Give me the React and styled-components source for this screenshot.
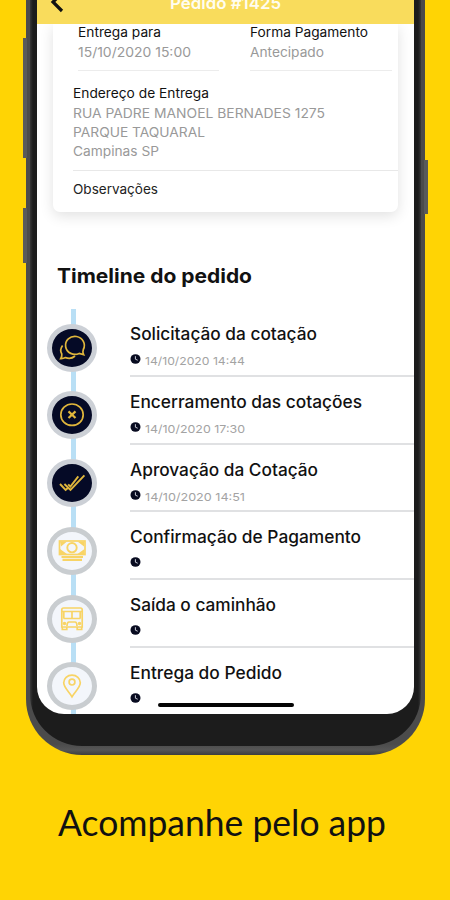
import React from 'react'
import styled, { createGlobalStyle } from 'styled-components'

const steps = [
    { title: 'Solicitação da cotação', date: '14/10/2020 14:44', icon: 'chat', done: true, w: 187 },
    { title: 'Encerramento das cotações', date: '14/10/2020 17:30', icon: 'close', done: true, w: 232 },
    { title: 'Aprovação da Cotação', date: '14/10/2020 14:51', icon: 'check', done: true, w: 188 },
    { title: 'Confirmação de Pagamento', date: '', icon: 'money', w: 231 },
    { title: 'Saída o caminhão', date: '', icon: 'bus', w: 146 },
    { title: 'Entrega do Pedido', date: '', icon: 'pin', w: 152 },
]

// drawn around the centre of the marker
const icons = {
    chat: (
        <>
            <path d="M11.3 1.500A9.400 9 0 1 0 7.200 5.400L11.600 6.600Q10.300 4 11.300 1.500z" />
            <path d="M-9.400-2.500C-11.700.5-11.700 3.500-10.200 6Q-9.900 8.500-11.300 10.600Q-8.500 10.700-6.500 9.600C-3 10.900.5 10.300 3 8" />
        </>
    ),
    close: (
        <>
            <ellipse cx="0" cy="-.3" rx="11.200" ry="10.700" />
            <path d="M-3.500-3.600l7 6.600M3.500-3.600l-7 6.600" strokeWidth="2.200" />
        </>
    ),
    check: (
        <path d="M-12 1l5.600 6 2-1.800M-7.600 1l6.100 6L12.400-7.600M-3.800 1.400l2.200 2.200L6.300-6.600" strokeWidth="1.900" />
    ),
    money: (
        <>
            <rect x="-12.500" y="-10" width="25.500" height="13.500" strokeWidth="1.700" />
            <path d="M-12-9.500h7L-11-4.500zM12.500-9.500h-7L12-4.500zM-12 3v-5L-5 3zM12.500 3v-5L5.500 3z" fill="currentColor" stroke="none" />
            <circle cx="0" cy="-3.300" r="4.700" strokeWidth="1.900" />
            <path d="M-10.500 6h21.500M-9.500 8.800h19.500" strokeWidth="2.200" />
        </>
    ),
    bus: (
        <>
            <path d="M-10.200 8V-9.300q0-1.700 1.700-1.700h17q1.700 0 1.700 1.700V8zM-9.500-7.500h19M-8.500-.5h17M0-7.500v7M-8.200-7.500v7M8.200-7.500v7" />
            <path d="M-9.700 8v2.500h4.500V8M9.700 8v2.500H5.200V8M-5 7q0-4 2-4h6q2 0 2 4" />
            <circle cx="-7.500" cy="4.600" r=".9" />
            <circle cx="7.500" cy="4.600" r=".9" />
        </>
    ),
    pin: (
        <>
            <path d="M0 10.800C-2.500 6.300-8.300 1.500-8.300-3.200C-8.300-7.700-4.600-10.800 0-10.800S8.300-7.700 8.300-3.200C8.300 1.500 2.500 6.300 0 10.800z" />
            <circle cx="0" cy="-3.900" r="2.900" />
        </>
    ),
}

// text of a fixed advance width
const Fit = ({ w, size, children, weight = 400, color = '#111', font = 'Inter' }) => (
    <FitSvg width={w} height={Math.ceil(size * 1.3)}>
        <text
            x="0"
            y={size}
            textLength={w}
            lengthAdjust="spacingAndGlyphs"
            fontSize={size}
            fontWeight={weight}
            fill={color}
            fontFamily={`${font}, sans-serif`}
        >
            {children}
        </text>
    </FitSvg>
)

const Clock = () => (
    <svg width="11" height="10" viewBox="0 0 11 10">
        <ellipse cx="5.500" cy="5" rx="5" ry="4.800" fill="#080b20" />
        <path d="M5.400 2.200v3l2.300 1" fill="none" stroke="#c9cbd6" strokeWidth="1" />
    </svg>
)

const App = () => {
    return (
        <Page>
            <GlobalStyle />
            <Phone>
                <SideKey $left="-3px" $top="38px" $height="120px" />
                <SideKey $left="-3px" $top="208px" $height="55px" />
                <SideKey $left="398px" $top="160px" $height="54px" />
                <Bezel>
                    <Screen>
                        <Header>
                            <Back width="14" height="22" viewBox="0 0 14 22">
                                <path d="M12 2L3 11l9 9" fill="none" stroke="#111" strokeWidth="3.200" />
                            </Back>
                            <Fit w={111} size={16.500} weight={600} color="#fffdf0">Pedido #1425</Fit>
                        </Header>
                        <Content>
                            <Card>
                                <Columns>
                                    <Field>
                                        <Fit w={83} size={13}>Entrega para</Fit>
                                        <Fit w={113} size={13} color="#999">15/10/2020 15:00</Fit>
                                    </Field>
                                    <Field>
                                        <Fit w={118} size={13}>Forma Pagamento</Fit>
                                        <Fit w={74} size={13} color="#999">Antecipado</Fit>
                                    </Field>
                                </Columns>
                                <Address>
                                    <Fit w={136} size={13}>Endereço de Entrega</Fit>
                                    <Fit w={252} size={13} color="#999">RUA PADRE MANOEL BERNADES 1275</Fit>
                                    <Fit w={132} size={13} color="#999">PARQUE TAQUARAL</Fit>
                                    <Fit w={86} size={13} color="#999">Campinas SP</Fit>
                                </Address>
                                <Notes>
                                    <Fit w={85} size={13} color="#222">Observações</Fit>
                                </Notes>
                            </Card>
                            <Heading>
                                <Fit w={195} size={20} weight={700}>Timeline do pedido</Fit>
                            </Heading>
                            <Timeline>
                                {steps.map((step) => (
                                    <Step key={step.title}>
                                        <Rail>
                                            <Marker $done={step.done}>
                                                <svg width="32" height="30" viewBox="-16 -15 32 30" fill="none" stroke="currentColor" strokeWidth="1.700">
                                                    {icons[step.icon]}
                                                </svg>
                                            </Marker>
                                        </Rail>
                                        <StepBody>
                                            <Fit w={step.w} size={17} weight={500}>{step.title}</Fit>
                                            <When>
                                                <Clock />
                                                {step.date && <Fit w={100} size={11} color="#a3a3a3">{step.date}</Fit>}
                                            </When>
                                        </StepBody>
                                    </Step>
                                ))}
                            </Timeline>
                        </Content>
                        <HomeBar />
                    </Screen>
                </Bezel>
            </Phone>
            <Caption>
                <Fit w={328} size={36} color="#111" font="Lato">Acompanhe pelo app</Fit>
            </Caption>
        </Page>
    )
}

export default App

const GlobalStyle = createGlobalStyle`
*{
    box-sizing:border-box;
}
body{
    margin:0;
    background:#ffd404;
}
`;

const FitSvg = styled.svg`
display:block;
flex:none;
overflow:visible;
`;

const Page = styled.div`
width:450px;
height:900px;
overflow:hidden;
background:#ffd404;
display:flex;
flex-direction:column;
align-items:center;
`;

const Phone = styled.div`
position:relative;
width:399px;
height:755px;
flex:none;
padding:0 4px 9px;
background:linear-gradient(#4b4b4b 0, #4b4b4b 744px, #565656 750px, #3d3d3d 755px);
border-radius:0 0 56px 56px;
`;

const SideKey = styled.div`
position:absolute;
left:${(p) => p.$left};
top:${(p) => p.$top};
width:4px;
height:${(p) => p.$height};
background:#595a5a;
`;

const Bezel = styled.div`
height:746px;
padding:0 7px 32px;
background:linear-gradient(90deg, #383838 0, #1c1c1c 3px, #1c1c1c 388px, #383838 391px);
border-radius:0 0 52px 52px;
`;

const Screen = styled.div`
position:relative;
width:377px;
height:714px;
overflow:hidden;
display:flex;
flex-direction:column;
background:#fff;
border-radius:0 0 27px 27px;
`;

const Header = styled.div`
height:24px;
flex:none;
position:relative;
z-index:1;
display:flex;
align-items:flex-start;
padding-left:13px;
background:#f9dc5c;

${FitSvg}{
    margin:-8px 0 0 106px;
}
`;

const Back = styled.svg`
flex:none;
margin-top:-9px;
`;

const Content = styled.div`
flex:1;
display:flex;
flex-direction:column;
`;

const Card = styled.div`
width:345px;
height:188px;
flex:none;
margin-left:16px;
background:#fff;
border-radius:0 0 7px 7px;
box-shadow:0 4px 14px rgba(0,0,0,.12);
`;

const Columns = styled.div`
display:flex;
gap:31px;
padding:0 6px 0 25px;
`;

const Field = styled.div`
width:142px;
height:47px;
display:flex;
flex-direction:column;
gap:3px;
border-bottom:1px solid #ececec;
`;

const Address = styled.div`
height:100px;
margin-left:20px;
padding-top:14px;
display:flex;
flex-direction:column;
gap:2px;
border-bottom:1px solid #e8e8e8;

${FitSvg}:first-child{
    margin-bottom:1px;
}
`;

const Notes = styled.div`
padding:10px 20px;
`;

const Heading = styled.div`
height:97px;
flex:none;
padding:51px 0 0 20.5px;
`;

const Timeline = styled.div`
display:flex;
flex-direction:column;
`;

const Step = styled.div`
height:67.8px;
flex:none;
display:flex;
gap:33px;
padding-left:10px;
`;

const Rail = styled.div`
width:50px;
padding-top:14.5px;
background:linear-gradient(#b9dff5, #b9dff5) 24px 0 / 5px 100% no-repeat;
`;

const Marker = styled.div`
width:50px;
height:48px;
display:flex;
align-items:center;
justify-content:center;
border:5px solid ${(p) => (p.$done ? '#ccd0d6' : '#c9cdd0')};
border-radius:50%;
background:${(p) => (p.$done ? '#050a26' : '#f3f6fb')};
color:${(p) => (p.$done ? '#e0b63c' : '#f8d465')};

svg{
    flex:none;
}
`;

const StepBody = styled.div`
flex:1;
display:flex;
flex-direction:column;
gap:4px;
padding-top:14px;
border-bottom:2px solid #e0e1e3;
`;

const When = styled.div`
display:flex;
align-items:flex-start;
gap:4px;
padding-top:4px;
height:20px;
`;

const HomeBar = styled.div`
position:absolute;
left:121px;
bottom:7px;
width:136px;
height:4px;
border-radius:2px;
background:#050505;
`;

const Caption = styled.div`
padding-top:45px;
padding-right:6px;
`;
